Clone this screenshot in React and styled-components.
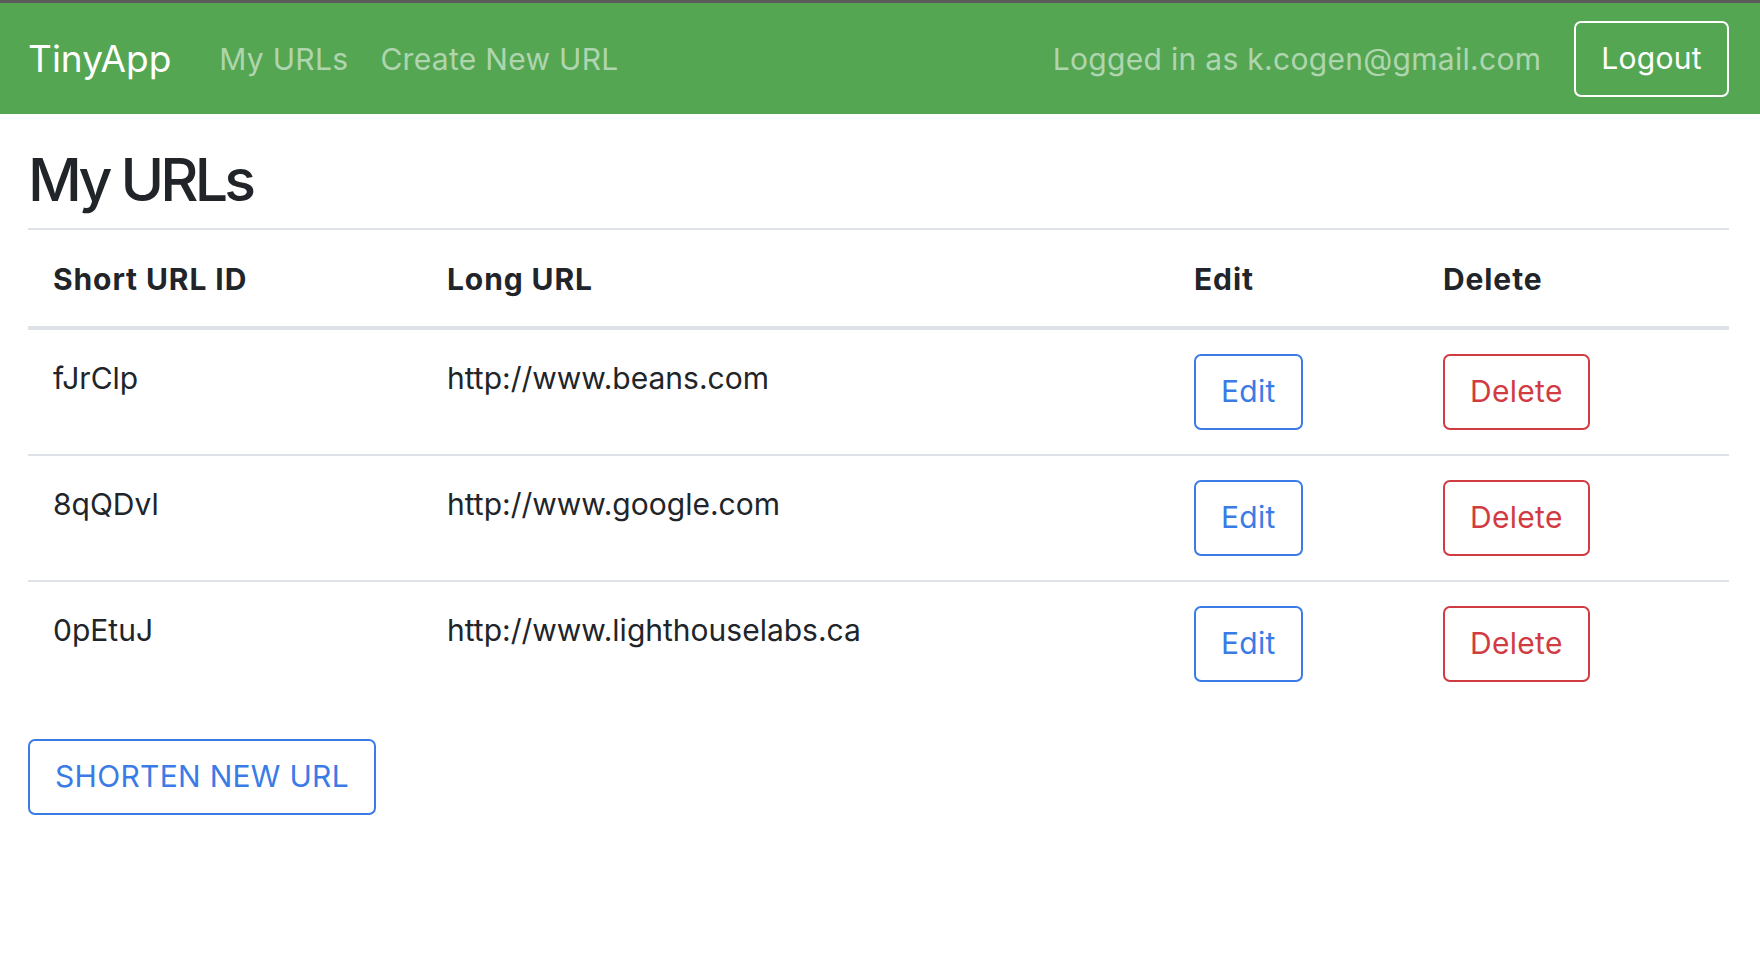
import styled, { createGlobalStyle } from "styled-components";

const GlobalStyle = createGlobalStyle`
  body {
    margin: 0;
    background: #fff;
    font-family: Inter, "Noto Sans", sans-serif;
    color: #212529;
  }
`;

const Navbar = styled.nav`
  display: flex;
  align-items: center;
  height: 111px;
  border-top: 3px solid #5a5a5a;
  background: #54a653;
  padding: 0 31px 0 28px;
`;

const Brand = styled.a`
  font-size: 37px;
  color: #fff;
  margin-right: 32px;
  text-decoration: none;
`;

const NavLink = styled.a`
  font-size: 30px;
  letter-spacing: 0.01em;
  color: rgba(255, 255, 255, 0.55);
  padding: 0 16px;
  text-decoration: none;
`;

const Spacer = styled.div`
  flex: 1;
`;

const LoggedIn = styled.span`
  font-size: 30px;
  letter-spacing: 0.01em;
  color: rgba(255, 255, 255, 0.55);
  margin-right: 33px;
`;

const OutlineButton = styled.button`
  font-family: inherit;
  font-size: 30px;
  line-height: 1.5;
  letter-spacing: 0.01em;
  padding: 13.5px 25px;
  background: transparent;
  border: 2px solid ${(p) => p.$color};
  color: ${(p) => p.$color};
  border-radius: 7px;
  cursor: pointer;
`;

const Main = styled.main`
  padding: 0 31px 0 28px;
`;

const Heading = styled.h1`
  font-size: 59px;
  font-weight: 500;
  letter-spacing: -0.065em;
  line-height: 1.2;
  margin: 31px 0 12px;
`;

const Table = styled.table`
  width: 100%;
  table-layout: fixed;
  border-collapse: collapse;
  font-size: 30px;
  line-height: 1.5;
`;

const Th = styled.th`
  box-sizing: border-box;
  text-align: left;
  font-weight: 700;
  letter-spacing: 0.03em;
  padding: 27px 25px 24px;
  border-top: 2px solid #dee2e6;
  border-bottom: 4px solid #dee2e6;
  width: ${(p) => p.$w || "auto"};
`;

const Td = styled.td`
  padding: 24px 25px;
  vertical-align: top;
  line-height: 1.62;
  border-top: 2px solid #dee2e6;
`;

const Row = styled.tr`
  &:first-child td {
    border-top: none;
  }
`;

const Footer = styled.div`
  margin-top: 33px;
`;

const urls = [
  { id: "fJrClp", long: "http://www.beans.com" },
  { id: "8qQDvl", long: "http://www.google.com" },
  { id: "0pEtuJ", long: "http://www.lighthouselabs.ca" },
];

export default function App() {
  return (
    <>
      <GlobalStyle />
      <Navbar>
        <Brand>TinyApp</Brand>
        <NavLink>My URLs</NavLink>
        <NavLink>Create New URL</NavLink>
        <Spacer />
        <LoggedIn>Logged in as k.cogen@gmail.com</LoggedIn>
        <OutlineButton $color="#fff">Logout</OutlineButton>
      </Navbar>
      <Main>
        <Heading>My URLs</Heading>
        <Table>
          <thead>
            <tr>
              <Th $w="394px">Short URL ID</Th>
              <Th $w="747px">Long URL</Th>
              <Th $w="249px">Edit</Th>
              <Th>Delete</Th>
            </tr>
          </thead>
          <tbody>
            {urls.map((u) => (
              <Row key={u.id}>
                <Td>{u.id}</Td>
                <Td>{u.long}</Td>
                <Td>
                  <OutlineButton $color="#3a7be6">Edit</OutlineButton>
                </Td>
                <Td>
                  <OutlineButton $color="#d13b42">Delete</OutlineButton>
                </Td>
              </Row>
            ))}
          </tbody>
        </Table>
        <Footer>
          <OutlineButton $color="#3a7be6">SHORTEN NEW URL</OutlineButton>
        </Footer>
      </Main>
    </>
  );
}
